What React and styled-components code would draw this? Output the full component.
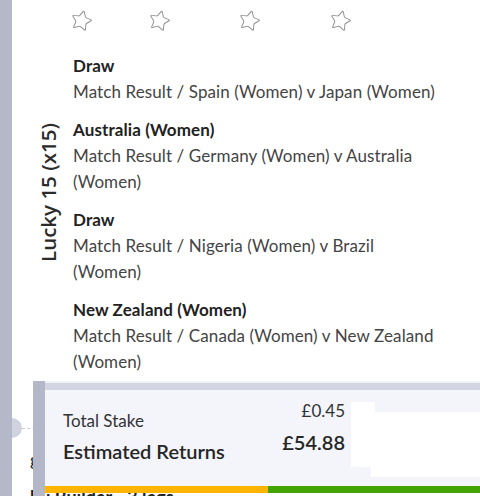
import React from 'react'
import styled, { createGlobalStyle } from 'styled-components'
import { Star } from 'lucide-react'

const GlobalStyle = createGlobalStyle`
  html, body {
    margin: 0;
    padding: 0;
    background: #ffffff;
    font-family: "Lato", "Liberation Sans", sans-serif;
    color: #333333;
  }
`

const Page = styled.div`
  position: relative;
  display: flex;
  width: 480px;
  height: 496px;
  overflow: hidden;
  background: #ffffff;
`

const Rail = styled.div`
  width: 12px;
  flex-shrink: 0;
  background: #b5b8c9;
  z-index: 2;
`

const Main = styled.div`
  flex: 1;
  display: flex;
  flex-direction: column;

  & > * {
    flex-shrink: 0;
  }
`

const StarRow = styled.div`
  display: grid;
  grid-template-columns: 78px 90px 91px 24px;
  padding: 9px 0 0 58px;
  height: 33px;
  color: #8f8f8f;

  svg {
    transform: rotate(14deg);
  }
`

const BetGroup = styled.div`
  display: flex;
  margin-top: 11px;
`

const LabelCol = styled.div`
  width: 61px;
  display: flex;
  justify-content: flex-end;
  padding: 71px 14px 0 0;
  box-sizing: border-box;
`

const VerticalLabel = styled.div`
  writing-mode: vertical-rl;
  transform: rotate(180deg);
  font-family: "Open Sans", "Liberation Sans", sans-serif;
  font-size: 20.5px;
  font-weight: 600;
  color: #2b2b2b;
  line-height: 22px;
  height: 138px;
  white-space: nowrap;
`

const Selections = styled.div`
  width: 374px;
  display: flex;
  flex-direction: column;
  gap: 12px;
`

const Selection = styled.div`
  font-size: 17px;
  line-height: 26px;
  letter-spacing: 0.1px;
`

const Title = styled.div`
  font-weight: 700;
  color: #222222;
`

const Detail = styled.div`
  color: #444444;
`

const LegRow = styled.div`
  display: flex;
  align-items: center;
  margin-top: 43px;
  height: 20px;
`

const HalfDot = styled.div`
  width: 10px;
  height: 20px;
  border-radius: 0 10px 10px 0;
  background: #d0d2e0;
`

const Dashes = styled.div`
  width: 40px;
  border-top: 1px dashed #c8cad8;
`

const Hidden = styled.div`
  padding-left: 18px;
  font-size: 18px;
  line-height: 22px;
  font-weight: ${p => p.weight};
  color: #222222;
  margin-top: ${p => p.top}px;
  white-space: nowrap;
`

const Panel = styled.div`
  position: absolute;
  left: 33px;
  top: 381px;
  right: 0;
  bottom: 0;
  border-left: 12px solid #b4b7c8;
  z-index: 3;
`

const Card = styled.div`
  height: 110px;
  display: flex;
  flex-direction: column;
  background: #f4f5fa;
  border-top: 2px solid #f0f1f6;
`

const CardTop = styled.div`
  height: 7px;
  background: #d3d5e2;
`

const CardBody = styled.div`
  flex: 1;
  display: flex;
  padding-left: 18px;
`

const Labels = styled.div`
  width: 190px;
  display: flex;
  flex-direction: column;
  padding-top: 20px;
`

const Values = styled.div`
  width: 92px;
  display: flex;
  flex-direction: column;
  align-items: flex-end;
  padding-top: 10px;
`

const Text = styled.div`
  font-size: ${p => p.size}px;
  font-weight: ${p => p.weight || 400};
  line-height: ${p => p.lh}px;
  color: ${p => p.color || '#333333'};
  margin-top: ${p => p.top || 0}px;
  white-space: nowrap;
`

const InputArea = styled.div`
  flex: 1;
  margin: 12px 0 9px 6px;
  background: #ffffff;
  clip-path: polygon(0 0, 24px 0, 24px 10px, 100% 10px, 100% 100%, 20px 100%, 20px calc(100% - 10px), 0 calc(100% - 10px));
`

const Stripe = styled.div`
  display: flex;
  height: 7px;
`

const StripePart = styled.div`
  width: ${p => p.w};
  flex: ${p => (p.grow ? 1 : 'none')};
  background: ${p => p.color};
`

const selections = [
  { title: 'Draw', lines: ['Match Result / Spain (Women) v Japan (Women)'] },
  { title: 'Australia (Women)', lines: ['Match Result / Germany (Women) v Australia', '(Women)'] },
  { title: 'Draw', lines: ['Match Result / Nigeria (Women) v Brazil', '(Women)'] },
  { title: 'New Zealand (Women)', lines: ['Match Result / Canada (Women) v New Zealand', '(Women)'] },
]

function App () {
  return (
    <>
      <GlobalStyle />
      <Page>
        <Rail />
        <Main>
          <StarRow>
            {[0, 1, 2, 3].map(i => (
              <Star key={i} size={23} strokeWidth={1} />
            ))}
          </StarRow>
          <BetGroup>
            <LabelCol>
              <VerticalLabel>Lucky 15 (x15)</VerticalLabel>
            </LabelCol>
            <Selections>
              {selections.map((s, i) => (
                <Selection key={i}>
                  <Title>{s.title}</Title>
                  {s.lines.map((l, j) => <Detail key={j}>{l}</Detail>)}
                </Selection>
              ))}
            </Selections>
          </BetGroup>
          <LegRow>
            <HalfDot />
            <Dashes />
          </LegRow>
          <Hidden weight={400} top={10}>g</Hidden>
          <Hidden weight={700} top={16}>bu Builder - 3 legs</Hidden>
        </Main>
        <Panel>
          <Card>
            <CardTop />
            <CardBody>
              <Labels>
                <Text size={17} lh={22}>Total Stake</Text>
                <Text size={20} weight={600} lh={26} top={6} color="#262626">Estimated Returns</Text>
              </Labels>
              <Values>
                <Text size={17} lh={22}>£0.45</Text>
                <Text size={20} weight={600} lh={26} top={7} color="#262626">£54.88</Text>
              </Values>
              <InputArea />
            </CardBody>
            <Stripe>
              <StripePart w="223px" color="#ffb400" />
              <StripePart grow color="#43a300" />
            </Stripe>
          </Card>
        </Panel>
      </Page>
    </>
  )
}

export default App
